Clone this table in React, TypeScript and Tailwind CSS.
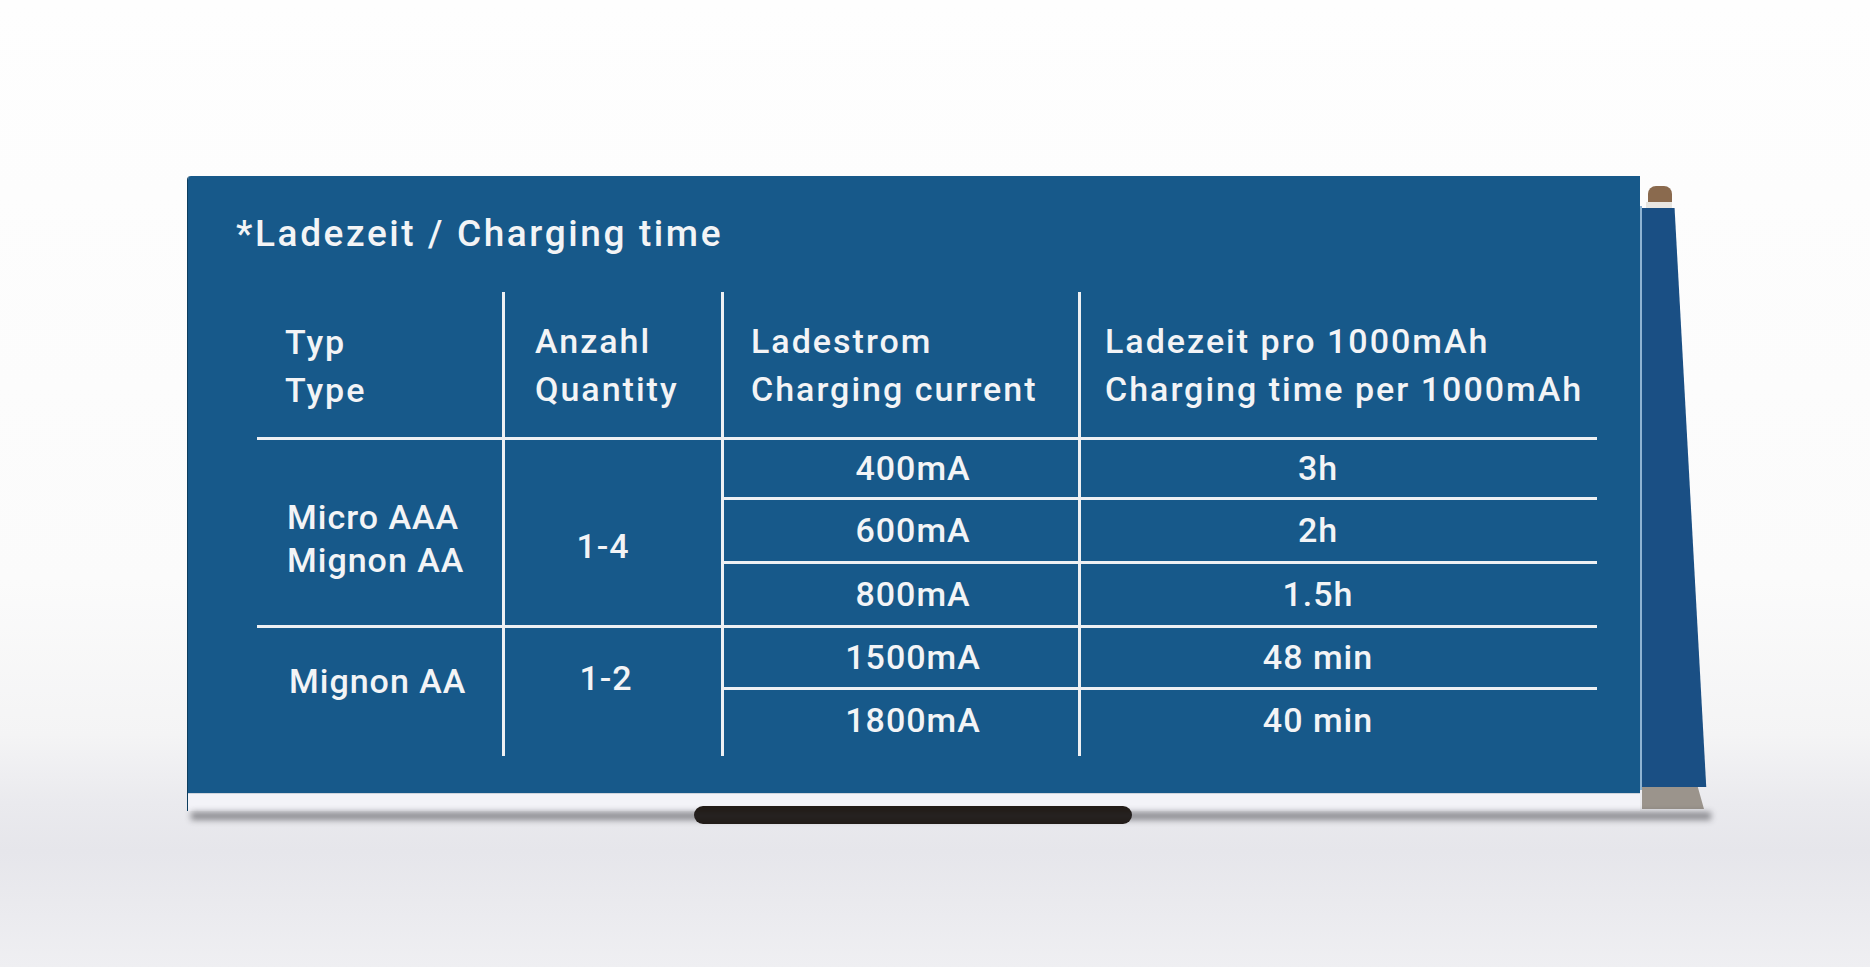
const font = { fontFamily: "Roboto, 'Liberation Sans', sans-serif" };

const values = [
  { current: "400mA", time: "3h" },
  { current: "600mA", time: "2h" },
  { current: "800mA", time: "1.5h" },
  { current: "1500mA", time: "48 min" },
  { current: "1800mA", time: "40 min" },
];

function ChargeTable() {
  return (
    <div className="grid grid-cols-[245px_219px_357px_519px] grid-rows-[148px_60px_64px_64px_62px_66px] text-[#f3f4f6] font-medium">
      {/* header */}
      <div className="flex flex-col justify-center border-b-[3px] border-[#eef0f3] pl-[28px] pt-[2px] text-[34px] leading-[48px] tracking-[2px]">
        <span>Typ</span>
        <span>Type</span>
      </div>
      <div className="flex flex-col justify-center border-b-[3px] border-l-[3px] border-[#eef0f3] pl-[30px] text-[34px] leading-[48px] tracking-[2px]">
        <span>Anzahl</span>
        <span>Quantity</span>
      </div>
      <div className="flex flex-col justify-center border-b-[3px] border-l-[3px] border-[#eef0f3] pl-[27px] text-[34px] leading-[48px] tracking-[2px]">
        <span>Ladestrom</span>
        <span>Charging current</span>
      </div>
      <div className="flex flex-col justify-center border-b-[3px] border-l-[3px] border-[#eef0f3] pl-[24px] text-[34px] leading-[48px] tracking-[2px]">
        <span>Ladezeit pro 1000mAh</span>
        <span>Charging time per 1000mAh</span>
      </div>

      {/* group 1 */}
      <div className="col-start-1 row-start-2 row-span-3 flex flex-col justify-center border-b-[3px] border-[#eef0f3] pl-[30px] pt-[12px] text-[34px] leading-[43px] tracking-[1px]">
        <span>Micro AAA</span>
        <span>Mignon AA</span>
      </div>
      <div className="col-start-2 row-start-2 row-span-3 flex items-center justify-center border-b-[3px] border-l-[3px] border-[#eef0f3] pr-[20px] pt-[28px] text-[34px] tracking-[1px]">
        1-4
      </div>

      {/* group 2 */}
      <div className="col-start-1 row-start-5 row-span-2 flex items-center pl-[32px] pb-[22px] text-[34px] tracking-[1px]">
        Mignon AA
      </div>
      <div className="col-start-2 row-start-5 row-span-2 flex items-center justify-center border-l-[3px] border-[#eef0f3] pr-[14px] pb-[28px] text-[34px] tracking-[1px]">
        1-2
      </div>

      {values.map((v, i) => (
        <div key={v.current} className="contents">
          <div
            className={
              i < values.length - 1
                ? "col-start-3 flex items-center justify-center border-b-[3px] border-l-[3px] border-[#eef0f3] pl-[24px] text-[34px] tracking-[1px]"
                : "col-start-3 flex items-center justify-center border-l-[3px] border-[#eef0f3] pl-[24px] pb-[6px] text-[34px] tracking-[1px]"
            }
          >
            {v.current}
          </div>
          <div
            className={
              i < values.length - 1
                ? "col-start-4 flex items-center justify-center border-b-[3px] border-l-[3px] border-[#eef0f3] pr-[42px] text-[34px] tracking-[1px]"
                : "col-start-4 flex items-center justify-center border-l-[3px] border-[#eef0f3] pr-[42px] pb-[6px] text-[34px] tracking-[1px]"
            }
          >
            {v.time}
          </div>
        </div>
      ))}
    </div>
  );
}

export default function App() {
  return (
    <div
      className="relative h-[967px] w-[1870px] overflow-hidden bg-[linear-gradient(180deg,#fefefe_0%,#fbfbfb_60%,#f4f4f5_76%,#eaeaee_83%,#e6e6eb_88%,#efeff2_100%)]"
      style={font}
    >
      <div className="pl-[187px] pt-[176px]">
        <div className="relative flex">
          {/* front face */}
          <div className="flex h-[635px] w-[1453px] flex-col overflow-hidden rounded-tl-[4px] border-l border-[#0d3d5e]">
            <div className="flex-1 bg-[#17598a] pl-[48px] pt-[40px]">
              <h2 className="text-[37px] leading-[36px] font-medium tracking-[2.6px] text-[#f3f4f6]">
                *Ladezeit / Charging time
              </h2>
              <div className="mt-[40px] pl-[21px]">
                <ChargeTable />
              </div>
            </div>
            <div className="h-[18px] border-t border-[#cfd4dc] bg-[#f3f3f8]"></div>
          </div>

          {/* side flap */}
          <div className="relative h-[635px] w-[72px]">
            <div className="absolute left-[8px] top-[10px] h-[28px] w-[24px] rounded-t-[8px] bg-[#8a6a4e]"></div>
            <div className="absolute left-[6px] top-[26px] h-[8px] w-[26px] bg-[#e8e6e2]"></div>
            <div className="absolute inset-0 top-[32px] bg-[#1a4f84] [clip-path:polygon(0_0,48%_0,92%_96%,0_96%)]"></div>
            <div className="absolute left-0 top-[30px] h-[584px] w-[2px] bg-[#8fb4d3]"></div>
            <div className="absolute bottom-[2px] left-[2px] h-[22px] w-[62px] bg-[#9b948c] [clip-path:polygon(0_0,90%_0,100%_100%,0_100%)]"></div>
          </div>

          {/* floor shadow under the box */}
          <div className="absolute left-[507px] top-[630px] h-[18px] w-[438px] rounded-[10px] bg-[#221b16]"></div>
          <div className="absolute left-[4px] top-[636px] h-[8px] w-[1520px] bg-[#2a2a30] opacity-50 blur-[3px]"></div>
        </div>
      </div>
    </div>
  );
}
